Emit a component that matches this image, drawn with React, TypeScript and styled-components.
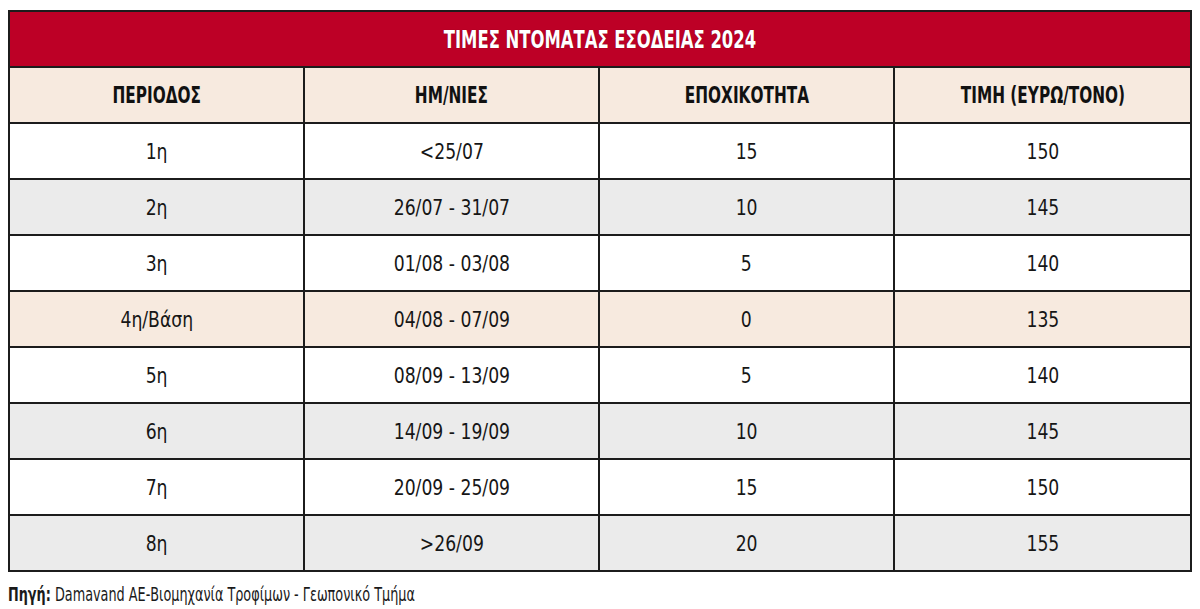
import * as React from 'react';
import styled, { createGlobalStyle } from 'styled-components';

const GlobalStyle = createGlobalStyle`
  html, body {
    margin: 0;
    padding: 0;
    background: #ffffff;
  }
  body {
    font-family: "DejaVu Sans Condensed", "DejaVu Sans", sans-serif;
    font-stretch: condensed;
    color: #161616;
  }
`;

const Page = styled.div`
  padding: 10px 8px 0 8px;
`;

const Frame = styled.div`
  width: 1184px;
  box-sizing: border-box;
  border: 2px solid #1c1c1c;
`;

// the reference face is a tall, narrow grotesque; squeeze DejaVu to match
const Squeeze = styled.span<{ $x: number; $origin?: string }>`
  display: inline-block;
  white-space: nowrap;
  transform: scaleX(${({ $x }) => $x});
  transform-origin: ${({ $origin }) => $origin || 'center'};
`;

const Title = styled.div`
  height: 54px;
  background: #bd0026;
  color: #ffffff;
  display: flex;
  align-items: center;
  justify-content: center;
  font-weight: bold;
  font-size: 25px;
  text-shadow: 0 0 1px rgba(60, 0, 10, 0.6);
`;

const Row = styled.div<{ $bg: string }>`
  display: grid;
  grid-template-columns: 293px 295px 295px 1fr;
  height: 56px;
  box-sizing: border-box;
  border-top: 2px solid #1c1c1c;
  background: ${({ $bg }) => $bg};
`;

const Cell = styled.div<{ $head?: boolean }>`
  display: flex;
  align-items: center;
  justify-content: center;
  font-size: ${({ $head }) => ($head ? '23px' : '22px')};
  font-weight: ${({ $head }) => ($head ? 'bold' : 'normal')};
  color: ${({ $head }) => ($head ? '#111' : '#161616')};
  & + & {
    border-left: 2px solid #1c1c1c;
  }
`;

const Source = styled.p`
  margin: 10px 0 0 0;
  font-size: 19px;
  line-height: 24px;
  color: #1a1a1a;
  b {
    font-weight: bold;
  }
`;

const WHITE = '#ffffff';
const GREY = '#ebebeb';
const BEIGE = '#f7eadf';

const heads = ['ΠΕΡΙΟΔΟΣ', 'ΗΜ/ΝΙΕΣ', 'ΕΠΟΧΙΚΟΤΗΤΑ', 'ΤΙΜΗ (ΕΥΡΩ/ΤΟΝΟ)'];

const rows = [
  { p: '1η', d: '<25/07', e: '15', t: '150', bg: WHITE },
  { p: '2η', d: '26/07 - 31/07', e: '10', t: '145', bg: GREY },
  { p: '3η', d: '01/08 - 03/08', e: '5', t: '140', bg: WHITE },
  { p: '4η/Βάση', d: '04/08 - 07/09', e: '0', t: '135', bg: BEIGE },
  { p: '5η', d: '08/09 - 13/09', e: '5', t: '140', bg: WHITE },
  { p: '6η', d: '14/09 - 19/09', e: '10', t: '145', bg: GREY },
  { p: '7η', d: '20/09 - 25/09', e: '15', t: '150', bg: WHITE },
  { p: '8η', d: '>26/09', e: '20', t: '155', bg: GREY },
];

export default function App() {
  return (
    <Page>
      <GlobalStyle />
      <Frame>
        <Title>
          <Squeeze $x={0.73}>ΤΙΜΕΣ ΝΤΟΜΑΤΑΣ ΕΣΟΔΕΙΑΣ 2024</Squeeze>
        </Title>
        <Row $bg={BEIGE}>
          {heads.map((h) => (
            <Cell key={h} $head>
              <Squeeze $x={0.74}>{h}</Squeeze>
            </Cell>
          ))}
        </Row>
        {rows.map((r) => (
          <Row key={r.p} $bg={r.bg}>
            {[r.p, r.d, r.e, r.t].map((v, i) => (
              <Cell key={i}>
                <Squeeze $x={0.87}>{v}</Squeeze>
              </Cell>
            ))}
          </Row>
        ))}
      </Frame>
      <Source>
        <Squeeze $x={0.75} $origin="left">
          <b>Πηγή:</b> Damavand ΑΕ-Βιομηχανία Τροφίμων - Γεωπονικό Τμήμα
        </Squeeze>
      </Source>
    </Page>
  );
}
